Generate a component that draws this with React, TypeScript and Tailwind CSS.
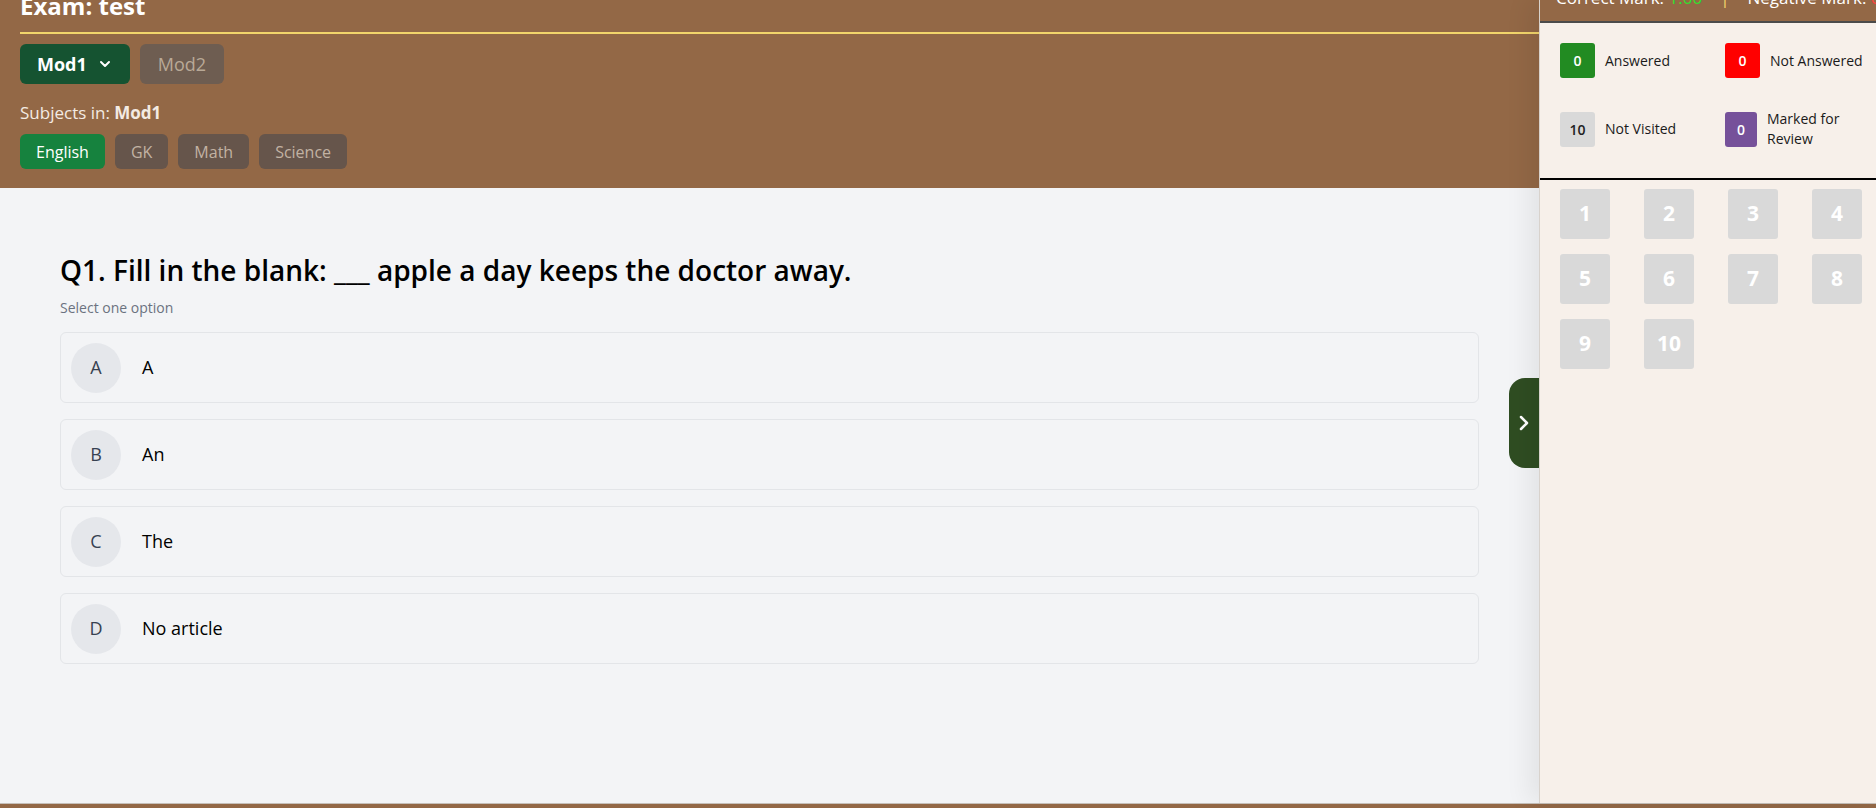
import { ChevronDown, ChevronRight } from "lucide-react";

const options = [
  { key: "A", text: "A" },
  { key: "B", text: "An" },
  { key: "C", text: "The" },
  { key: "D", text: "No article" },
];

const subjects = ["English", "GK", "Math", "Science"];

function Legend({ count, label, box, shrink }: { count: string; label: string; box: string; shrink?: boolean }) {
  return (
    <div className="flex items-center gap-[10px]">
      <div
        className={`h-[35px] ${shrink ? "w-[32px]" : "w-[35px]"} shrink-0 rounded-[3px] flex items-center justify-center text-[14px] font-semibold ${box}`}
      >
        {count}
      </div>
      <span className="text-[14px] font-medium text-[#1a1a1a] leading-[20px]">{label}</span>
    </div>
  );
}

export default function App() {
  return (
    <div className="h-[808px] w-[1876px] overflow-hidden flex flex-col font-['Open_Sans','Noto_Sans',sans-serif]">
      <div className="flex flex-1 min-h-0">
        {/* left: exam area */}
        <div className="relative flex-1 min-w-0 flex flex-col">
          <header className="h-[188px] shrink-0 bg-[#936846] pl-5 overflow-hidden">
            <h1 className="-mt-[10px] text-[24px] leading-[32px] font-bold text-white">Exam: test</h1>
            <div className="mt-[10px] h-[2px] bg-[#f2d56b]" />
            <div className="mt-[10px] flex gap-[10px]">
              <button className="h-[40px] px-[17px] rounded-md bg-[#155331] text-white text-[18px] font-bold flex items-center gap-[10px]">
                Mod1
                <ChevronDown size={16} strokeWidth={3} />
              </button>
              <button className="h-[40px] px-[18px] rounded-md bg-[#6e5d51] text-[#b9a997] text-[18px]">Mod2</button>
            </div>
            <p className="mt-[18px] text-[17px] leading-[22px] text-[#f3ebe3]">
              Subjects in: <span className="font-bold">Mod1</span>
            </p>
            <div className="mt-[10px] flex gap-[10px]">
              {subjects.map((s, i) => (
                <button
                  key={s}
                  className={`h-[35px] px-4 rounded-md text-[16px] ${
                    i === 0 ? "bg-[#16823e] text-white" : "bg-[#66554b] text-[#c2b2a3]"
                  }`}
                >
                  {s}
                </button>
              ))}
            </div>
          </header>

          <main className="flex-1 bg-[#f3f4f6] px-[60px] pt-[64px]">
            <h2 className="text-[28px] leading-[36px] font-semibold text-black">
              Q1. Fill in the blank: ___ apple a day keeps the doctor away.
            </h2>
            <p className="mt-[10px] text-[14px] leading-[20px] text-[#6b7280]">Select one option</p>
            <div className="mt-[14px] flex flex-col gap-[16px]">
              {options.map((o) => (
                <div
                  key={o.key}
                  className="h-[71px] rounded-md border border-[#e3e5e8] flex items-center px-[10px] gap-[21px]"
                >
                  <div className="h-[50px] w-[50px] rounded-full bg-[#e5e7eb] flex items-center justify-center text-[18px] text-[#374151]">
                    {o.key}
                  </div>
                  <span className="text-[18px] text-black">{o.text}</span>
                </div>
              ))}
            </div>
          </main>

          <button className="absolute right-0 top-[378px] h-[90px] w-[30px] rounded-l-[16px] bg-[#2f4d22] text-white flex items-center justify-center">
            <ChevronRight size={24} strokeWidth={2.5} />
          </button>
        </div>

        {/* right: question palette */}
        <aside className="relative z-10 w-[337px] shrink-0 bg-[#f7f0ea] border-l border-[#d8d2cc] shadow-[-10px_0_24px_rgba(0,0,0,0.07)] flex flex-col">
          <div className="h-[23px] bg-[#936846] border-b-2 border-[#4b4b4b] overflow-hidden pl-[16px]">
            <div className="-mt-[13px] flex items-center text-[17px] leading-[22px] text-white whitespace-nowrap">
              <span>
                Correct Mark: <span className="text-[#2fe02f]">1.00</span>
              </span>
              <span className="mx-[18px] text-[#f2d56b]">|</span>
              <span>
                Negative Mark: <span className="text-[#ff4040]">0.25</span>
              </span>
            </div>
          </div>

          <div className="pl-[20px] pt-[20px] grid grid-cols-[165px_1fr] gap-y-[31px]">
            <Legend count="0" label="Answered" box="bg-[#228b22] text-white" />
            <Legend count="0" label="Not Answered" box="bg-[#ff0000] text-white" />
            <Legend count="10" label="Not Visited" box="bg-[#d9d9d9] text-[#222]" />
            <Legend count="0" label="Marked for Review" box="bg-[#76519a] text-white" shrink />
          </div>

          <div className="mt-[29px] h-[2px] bg-black" />

          <div className="px-[20px] pt-[9px] grid grid-cols-[repeat(4,50px)] gap-x-[34px] gap-y-[15px]">
            {Array.from({ length: 10 }, (_, i) => (
              <div
                key={i}
                className="h-[50px] w-[50px] rounded-[3px] bg-[#d9d9d9] flex items-center justify-center text-[21px] font-bold text-white"
              >
                {i + 1}
              </div>
            ))}
          </div>
        </aside>
      </div>
      <div className="h-[5px] shrink-0 bg-[#936846] border-t border-[#c6bfb8]" />
    </div>
  );
}
